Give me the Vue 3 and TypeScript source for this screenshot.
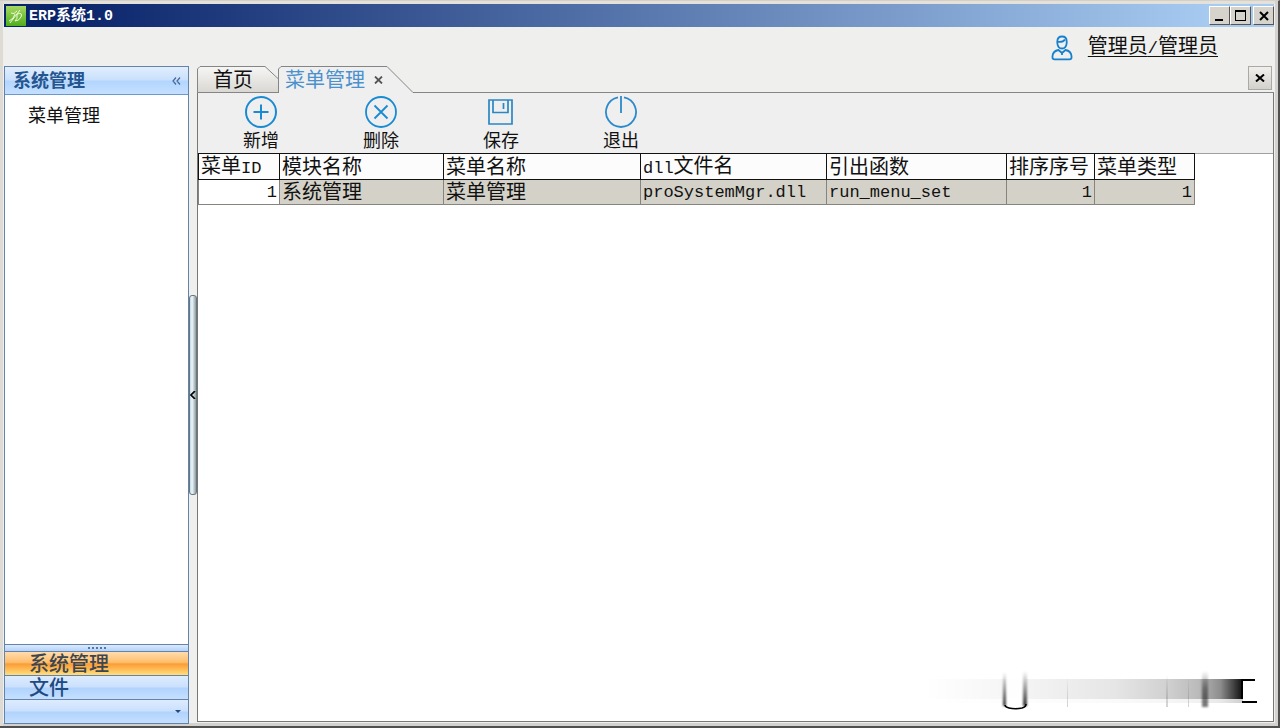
<script setup lang="ts">
import { ref } from 'vue'

interface MenuRow {
  id: number
  module: string
  name: string
  dll: string
  fn: string
  order: number
  type: number
}

const rows = ref<MenuRow[]>([
  { id: 1, module: '系统管理', name: '菜单管理', dll: 'proSystemMgr.dll', fn: 'run_menu_set', order: 1, type: 1 },
])
const activeGroup = ref('系统管理')
const groups = ['系统管理', '文件']
</script>

<template>
  <div class="window">
    <header class="titlebar">
      <svg class="logo" width="20" height="20" viewBox="0 0 20 20" aria-hidden="true">
        <defs>
          <linearGradient id="logo-fill" x1="0" y1="0" x2="0" y2="1">
            <stop offset="0" stop-color="#a6d860" />
            <stop offset="1" stop-color="#4fae1c" />
          </linearGradient>
        </defs>
        <rect width="20" height="20" fill="url(#logo-fill)" />
        <path d="M5 7Q8 9 11 5M3 15Q8 13 9 8M9 15Q12 13 11 8Q17 6 15 11Q13 15 9 15M4 17L14 4" fill="none" stroke="#eef9dc" stroke-width="1" />
      </svg>
      <h1 class="caption"><span class="mono">ERP</span>系统<span class="mono">1.0</span></h1>
      <div class="sysbuttons">
        <button type="button" class="sys" aria-label="最小化">
          <svg width="16" height="14" viewBox="0 0 16 14"><rect x="3" y="10" width="8" height="2" /></svg>
        </button>
        <button type="button" class="sys" aria-label="最大化">
          <svg width="16" height="14" viewBox="0 0 16 14"><path d="M2 1H13V12H2ZM3 3V11H12V3Z" fill-rule="evenodd" /></svg>
        </button>
        <button type="button" class="sys close" aria-label="关闭">
          <svg width="16" height="14" viewBox="0 0 16 14"><path d="M4 3L12 11M12 3L4 11" stroke="#000" stroke-width="2" /></svg>
        </button>
      </div>
    </header>

    <div class="userbar">
      <svg width="22" height="26" viewBox="0 0 22 26" fill="none" stroke="#1680cc" stroke-width="1.8" aria-hidden="true">
        <path d="M6.3 6.5Q6.5 1.5 11 1.5Q15.7 1.5 15.7 6.5V8Q15.2 13.5 11 13.5Q6.8 13.5 6.3 8Z" />
        <path d="M6.5 6.8Q12 7.5 14 4.500" />
        <path d="M7.5 15L11 18L14.5 15Q20 16 20.5 21V22.5Q20.5 24.300 18.5 24.300H3.500Q1.500 24.300 1.500 22.500V21Q2 16 7.500 15ZM11 18V20" />
      </svg>
      <a href="#" class="user">管理员<span class="mono slash">/</span>管理员</a>
    </div>

    <div class="body">
      <nav class="sidebar">
        <div class="side-head">
          <h2>系统管理</h2>
          <button type="button" class="collapse" aria-label="折叠">
            <svg width="9" height="8" viewBox="0 0 9 8" fill="none" stroke="#44699a" stroke-width="1.2"><path d="M4 .5L1 4L4 7.5M8 .5L5 4L8 7.5" /></svg>
          </button>
        </div>
        <div class="side-list"><a href="#" class="side-item">菜单管理</a></div>
        <div class="grip" aria-hidden="true"><i v-for="n in 5" :key="n"></i></div>
        <button
          v-for="g in groups"
          :key="g"
          type="button"
          class="group"
          :class="{ active: g === activeGroup }"
          @click="activeGroup = g"
        >{{ g }}</button>
        <div class="side-foot">
          <button type="button" class="more" aria-label="更多">
            <svg width="6" height="4" viewBox="0 0 6 4"><path d="M0 0H6L3 3Z" fill="#234a80" /></svg>
          </button>
        </div>
      </nav>

      <div class="splitter">
        <button type="button" class="handle" aria-label="收起侧栏">
          <svg width="6" height="8" viewBox="0 0 6 8"><path d="M5 0L1 4L5 8" fill="none" stroke="#000" stroke-width="1.7" /></svg>
        </button>
      </div>

      <main class="main">
        <div class="tabs">
          <div class="tab home">
            <svg class="tab-shape" width="82" height="27" viewBox="0 0 82 27" aria-hidden="true">
              <defs>
                <linearGradient id="tab-fill" x1="0" y1="0" x2="0" y2="1">
                  <stop offset="0" stop-color="#f6f6f5" />
                  <stop offset="1" stop-color="#d9d7d2" />
                </linearGradient>
              </defs>
              <path d="M.5 26.5V3L3 .5H68L81.5 13V26.5Z" fill="url(#tab-fill)" stroke="#858585" />
            </svg>
            <button type="button" class="tab-label">首页</button>
          </div>
          <div class="tab current">
            <svg class="tab-shape" width="136" height="27" viewBox="0 0 136 27" aria-hidden="true">
              <path d="M.5 27V3L3 .5H109L135 26.5V27Z" fill="#efefef" />
              <path d="M.5 27V3L3 .5H109L135 26.5" fill="none" stroke="#858585" />
            </svg>
            <button type="button" class="tab-label">菜单管理</button>
            <button type="button" class="tab-close" aria-label="关闭标签">
              <svg width="9" height="8" viewBox="0 0 9 8"><path d="M1 .5L8 7.5M8 .5L1 7.5" stroke="#555" stroke-width="1.8" /></svg>
            </button>
          </div>
          <button type="button" class="page-close" aria-label="关闭页面">
            <svg width="10" height="8" viewBox="0 0 10 8"><path d="M1 .5L9 7.5M9 .5L1 7.5" stroke="#000" stroke-width="2" /></svg>
          </button>
        </div>

        <div class="page">
          <div class="toolbar">
            <button type="button" class="tool">
              <svg width="34" height="34" viewBox="0 0 34 34" fill="none" stroke="#188bd2" stroke-width="2"><circle cx="17" cy="17" r="15" /><path d="M9.5 17H24.5M17 9.5V24.5" /></svg>
              <span>新增</span>
            </button>
            <button type="button" class="tool">
              <svg width="34" height="34" viewBox="0 0 34 34" fill="none" stroke="#188bd2" stroke-width="1.8"><circle cx="17" cy="17" r="15" /><path d="M10.5 10.5L23.5 23.5M23.5 10.5L10.5 23.5" /></svg>
              <span>删除</span>
            </button>
            <button type="button" class="tool">
              <svg width="34" height="34" viewBox="0 0 34 34" fill="none" stroke="#2b87c4" stroke-width="1.7"><path d="M5 5H28V29H5ZM9 5V17.5H24V5M19.5 8V14" /></svg>
              <span>保存</span>
            </button>
            <button type="button" class="tool">
              <svg width="34" height="34" viewBox="0 0 34 34" fill="none" stroke="#2b8acb" stroke-width="1.8"><path d="M14 2.3A15 15 0 1 0 20 2.3M17 1V18" /></svg>
              <span>退出</span>
            </button>
          </div>

          <table class="grid">
            <colgroup>
              <col class="c-id" /><col class="c-module" /><col class="c-name" /><col class="c-dll" />
              <col class="c-fn" /><col class="c-order" /><col class="c-type" />
            </colgroup>
            <thead>
              <tr>
                <th scope="col">菜单<span class="mono">ID</span></th>
                <th scope="col">模块名称</th>
                <th scope="col">菜单名称</th>
                <th scope="col"><span class="mono">dll</span>文件名</th>
                <th scope="col">引出函数</th>
                <th scope="col">排序序号</th>
                <th scope="col">菜单类型</th>
              </tr>
            </thead>
            <tbody>
              <tr v-for="r in rows" :key="r.id">
                <td class="num key mono">{{ r.id }}</td>
                <td>{{ r.module }}</td>
                <td>{{ r.name }}</td>
                <td class="mono">{{ r.dll }}</td>
                <td class="mono">{{ r.fn }}</td>
                <td class="num mono">{{ r.order }}</td>
                <td class="num mono">{{ r.type }}</td>
              </tr>
            </tbody>
          </table>

          <svg class="smear" width="336" height="44" viewBox="0 0 336 44" aria-hidden="true">
            <defs>
              <linearGradient id="s-band" x1="0" y1="0" x2="1" y2="0">
                <stop offset="0" stop-color="#000" stop-opacity="0" />
                <stop offset=".35" stop-color="#000" stop-opacity=".05" />
                <stop offset=".6" stop-color="#000" stop-opacity=".1" />
                <stop offset=".76" stop-color="#000" stop-opacity=".18" />
                <stop offset=".86" stop-color="#000" stop-opacity=".27" />
                <stop offset=".93" stop-color="#000" stop-opacity=".45" />
                <stop offset="1" stop-color="#000" stop-opacity=".95" />
              </linearGradient>
              <linearGradient id="s-post" x1="0" y1="0" x2="0" y2="1">
                <stop offset="0" stop-color="#000" stop-opacity="0" />
                <stop offset="1" stop-color="#000" stop-opacity=".8" />
              </linearGradient>
              <linearGradient id="s-wide" x1="0" y1="0" x2="0" y2="1">
                <stop offset="0" stop-color="#000" stop-opacity="0" />
                <stop offset=".5" stop-color="#000" stop-opacity=".4" />
                <stop offset="1" stop-color="#000" stop-opacity=".55" />
              </linearGradient>
              <linearGradient id="s-thin" x1="0" y1="0" x2="0" y2="1">
                <stop offset="0" stop-color="#000" stop-opacity="0" />
                <stop offset="1" stop-color="#000" stop-opacity=".18" />
              </linearGradient>
              <filter id="s-soft" x="-10%" y="-20%" width="120%" height="140%"><feGaussianBlur stdDeviation=".8" /></filter>
            </defs>
            <rect x="2" y="9" width="320" height="20" fill="url(#s-band)" />
            <rect x="2" y="29" width="320" height="4" fill="url(#s-band)" opacity=".2" />
            <rect x="85" y="6" width="20" height="30" fill="#fff" opacity=".85" />
            <g filter="url(#s-soft)">
              <rect x="82" y="2" width="3" height="34" fill="url(#s-post)" />
              <rect x="102" y="1" width="4" height="35" fill="url(#s-post)" />
              <rect x="281" y="1" width="6" height="36" fill="url(#s-wide)" />
            </g>
            <rect x="245" y="4" width="2" height="33" fill="url(#s-thin)" />
            <rect x="146" y="7" width="1" height="30" fill="url(#s-thin)" />
            <rect x="267" y="7" width="1" height="30" fill="url(#s-thin)" />
            <path d="M84 35Q84 37 88 38Q94 39.500 101 38Q105 37 105 34" fill="none" stroke="#000" stroke-width="1.6" />
            <path d="M334 10H321M321 9V29M321 32H336" fill="none" stroke="#000" stroke-width="2" />
          </svg>
        </div>
      </main>
    </div>
  </div>
</template>

<style>
html,
body,
#app {
  height: 100%;
}
body {
  margin: 0;
}
</style>

<style scoped>
* {
  box-sizing: border-box;
}
.window {
  min-height: 100%;
  display: flex;
  flex-direction: column;
  padding: 3px 4px 2px 4px;
  background: #efefee;
  border: 1px solid #d4d0c8;
  border-left: 0;
  border-right: 2px solid #505050;
  border-bottom: 2px solid #505050;
  box-shadow: inset 3px 0 #dedbd5, inset -3px 0 #d4d2cf, inset 0 3px #e4e0da, inset 0 -3px #d4d2cf;
  font-family: "Liberation Sans", "Noto Sans CJK SC", sans-serif;
  color: #111;
}
.mono {
  font-family: "Liberation Mono", "Noto Sans CJK SC", monospace;
}
button {
  margin: 0;
  padding: 0;
  border: 0;
  background: none;
  font: inherit;
  color: inherit;
  display: flex;
  align-items: center;
  justify-content: center;
}
h1,
h2 {
  margin: 0;
}
a {
  color: inherit;
}
.titlebar {
  flex: none;
  height: 23px;
  display: flex;
  align-items: center;
  gap: 3px;
  padding: 0 0 0 2px;
  background: linear-gradient(90deg, #0a246a 5%, #a6caf0 95%);
}
.logo {
  flex: none;
}
.caption {
  flex: 1;
  font-size: 15px;
  line-height: 20px;
  font-weight: 700;
  color: #fff;
}
.sysbuttons {
  display: flex;
}
.sys {
  width: 21px;
  height: 19px;
  background: #d6d3cc;
  border: 1px solid;
  border-color: #fff #555 #555 #fff;
}
.sys.close {
  margin-left: 2px;
}
.userbar {
  flex: none;
  height: 39px;
  display: flex;
  align-items: center;
  justify-content: flex-end;
  gap: 15px;
  padding: 2px 56px 0 0;
}
.user {
  font-size: 20px;
  line-height: 24px;
  text-decoration: underline;
  text-underline-offset: 3px;
  text-decoration-thickness: 1px;
}
.slash {
  font-size: 17px;
}
.body {
  flex: 1;
  display: flex;
}
.sidebar {
  flex: none;
  width: 185px;
  display: flex;
  flex-direction: column;
  border: 1px solid #6482aa;
  background: #fff;
}
.side-head {
  height: 28px;
  display: flex;
  align-items: center;
  justify-content: space-between;
  padding: 0 7px 0 8px;
  background: linear-gradient(#e1eefd, #c9e0fc 48%, #b3d5fe 52%, #c4e0ff);
  border-bottom: 1px solid #6c98cc;
}
.side-head h2 {
  font-size: 18px;
  line-height: 24px;
  font-weight: 700;
  color: #24558f;
}
.side-list {
  flex: 1;
  padding: 9px 0 0 23px;
}
.side-item {
  display: block;
  font-size: 18px;
  line-height: 24px;
  text-decoration: none;
}
.grip {
  height: 7px;
  display: flex;
  align-items: center;
  justify-content: center;
  gap: 2px;
  border-top: 1px solid #6482aa;
  background: linear-gradient(#dcebfd, #b3d2f8);
}
.grip i {
  width: 2px;
  height: 2px;
  background: #5676a3;
}
.group {
  height: 24px;
  justify-content: flex-start;
  padding-left: 24px;
  border-top: 1px solid #6482aa;
  background: linear-gradient(#dcecff, #cbe0fd 48%, #b0d2fc 52%, #c5e0ff);
  font-size: 20px;
  line-height: 22px;
  font-weight: 500;
  color: #1f4a82;
}
.group.active {
  background: linear-gradient(#ffdcae, #ffbe6c 45%, #fb9c35 52%, #ffdf7d);
  color: #3c4650;
}
.side-foot {
  height: 24px;
  display: flex;
  align-items: center;
  justify-content: flex-end;
  padding-right: 7px;
  border-top: 1px solid #6482aa;
  background: linear-gradient(#dcecff, #cbe0fd 48%, #b0d2fc 52%, #c5e0ff);
}
.splitter {
  flex: none;
  width: 8px;
  display: flex;
  align-items: center;
}
.handle {
  width: 8px;
  height: 200px;
  border: 1px solid #66777f;
  border-radius: 3px;
  background: linear-gradient(90deg, #c3d5dd, #edf7fb 35%, #8c9ca4);
}
.main {
  flex: 1;
  min-width: 0;
  display: flex;
  flex-direction: column;
  margin-bottom: 2px;
}
.tabs {
  flex: none;
  height: 27px;
  display: flex;
  box-shadow: inset 0 -1px #858585;
}
.tab {
  position: relative;
  display: flex;
  align-items: center;
}
.tab.home {
  width: 81px;
  padding-left: 16px;
}
.tab.current {
  width: 136px;
  padding-left: 7px;
  gap: 9px;
  color: #4a91cd;
}
.tab-shape {
  position: absolute;
  left: 0;
  top: 0;
}
.tab-label,
.tab-close {
  position: relative;
}
.tab-label {
  font-size: 20px;
  line-height: 24px;
  white-space: nowrap;
}
.page-close {
  align-self: flex-start;
  margin-left: auto;
  margin-right: 2px;
  width: 24px;
  height: 24px;
  border: 1px solid #aaa9a5;
  background: linear-gradient(#efefed, #d3d1cb);
}
.page {
  flex: 1;
  position: relative;
  background: #fff;
  border: 1px solid #777;
  border-top: 0;
}
.toolbar {
  height: 61px;
  display: flex;
  padding-left: 3px;
  background: #efefef;
  border-bottom: 1px solid #a0a0a0;
}
.tool {
  width: 120px;
  flex-direction: column;
  justify-content: flex-start;
  padding-top: 2px;
}
.tool span {
  font-size: 18px;
  line-height: 24px;
}
.grid {
  width: 996px;
  margin-top: -1px;
  table-layout: fixed;
  border-collapse: collapse;
  font-size: 20px;
  line-height: 24px;
}
.c-id { width: 81px; }
.c-module { width: 164px; }
.c-name { width: 197px; }
.c-dll { width: 186px; }
.c-fn { width: 180px; }
.c-order { width: 88px; }
.c-type { width: 100px; }
.grid th,
.grid td {
  height: 25px;
  padding: 0 2px;
  text-align: left;
  font-weight: 400;
  white-space: nowrap;
}
.grid th {
  height: 26px;
  border: 1px solid #111;
  background: #fcfcfc;
}
.grid td {
  border: 1px solid #85847f;
  background: #d4d1c8;
}
.grid td.key {
  background: #fff;
}
.grid td.num {
  text-align: right;
}
.grid .mono {
  font-size: 17px;
  line-height: 20px;
}
.grid td.mono {
  padding-top: 2px;
}
.smear {
  position: absolute;
  right: 16px;
  bottom: 7px;
}
</style>
